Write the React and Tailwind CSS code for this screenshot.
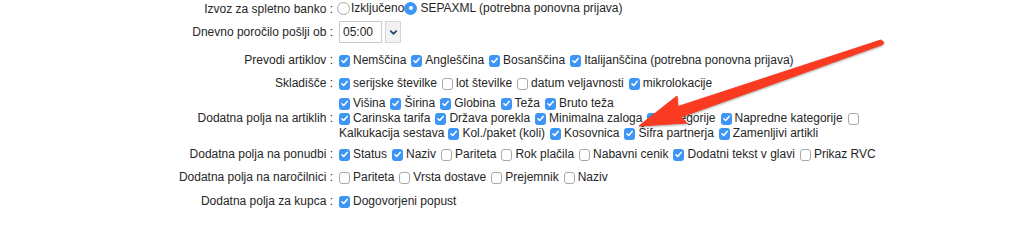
import React from "react";

function Cb({ checked }) {
  return checked ? (
    <span className="inline-flex h-[12px] w-[11px] shrink-0 items-center justify-center rounded-[3px] bg-[#3d95f6]">
      <svg viewBox="0 0 12 12" className="h-[11px] w-[11px]">
        <path d="M3.2 6.3 L5.1 8.2 L8.9 3.7" fill="none" stroke="white" strokeWidth="1.7" strokeLinecap="round" strokeLinejoin="round" />
      </svg>
    </span>
  ) : (
    <span className="inline-block h-[12px] w-[11px] shrink-0 rounded-[3px] border border-[#a9a9a9] bg-white" />
  );
}

function Radio({ checked }) {
  return checked ? (
    <span className="inline-flex h-[13px] w-[13px] shrink-0 items-center justify-center rounded-full bg-[#3d95f6]">
      <span className="h-[4px] w-[4px] rounded-full bg-white" />
    </span>
  ) : (
    <span className="inline-block h-[13px] w-[13px] shrink-0 rounded-full border border-[#a9a9a9] bg-white" />
  );
}

function Item({ checked, children }) {
  return (
    <span className="mr-[5px] inline-flex items-center gap-[3px] whitespace-nowrap">
      <Cb checked={checked} />
      <span>{children}</span>
    </span>
  );
}

function Row({ label, className = "", children }) {
  return (
    <div className={"flex items-center " + className}>
      <div className="w-[333px] shrink-0 whitespace-nowrap text-right">{label} :</div>
      <div className="pl-[6px]">{children}</div>
    </div>
  );
}

export default function App() {
  return (
    <div
      className="relative h-[215px] w-[1024px] overflow-hidden bg-white text-[12px] leading-[15px] text-[#262626]"
      style={{ fontFamily: '"Liberation Sans", Arial, sans-serif' }}
    >
      <div className="flex flex-col pt-[2px]">
        <Row label="Izvoz za spletno banko" className="h-[15px]">
          <span className="-ml-[2px] inline-flex items-center">
            <Radio />
            <span className="ml-[1px]">Izključeno</span>
            <Radio checked />
            <span className="ml-[3px]">SEPAXML (potrebna ponovna prijava)</span>
          </span>
        </Row>
        <Row label="Dnevno poročilo pošlji ob" className="mt-[4px] h-[22px]">
          <div className="flex items-center gap-[3px]">
            <div className="flex h-[22px] w-[43px] items-center border border-[#c9c9c9] bg-white pl-[3px]">05:00</div>
            <div className="flex h-[22px] w-[16px] items-center justify-center border border-[#d6d6d6] border-r-[#c6dcc6] bg-[#f2f2f2]">
              <svg viewBox="0 0 10 10" className="h-[9px] w-[9px]">
                <path d="M2 3.5 L5 6.5 L8 3.5" fill="none" stroke="#27466f" strokeWidth="2" strokeLinecap="round" strokeLinejoin="round" />
              </svg>
            </div>
          </div>
        </Row>
        <Row label="Prevodi artiklov" className="mt-[10px] h-[15px]">
          <div className="flex items-center">
            <Item checked>Nemščina</Item>
            <Item checked>Angleščina</Item>
            <Item checked>Bosanščina</Item>
            <Item checked>Italijanščina (potrebna ponovna prijava)</Item>
          </div>
        </Row>
        <Row label="Skladišče" className="mt-[8px] h-[15px]">
          <div className="flex items-center">
            <Item checked>serijske številke</Item>
            <Item>lot številke</Item>
            <Item>datum veljavnosti</Item>
            <Item checked>mikrolokacije</Item>
          </div>
        </Row>
        <Row label="Dodatna polja na artiklih" className="mt-[5px] h-[45px]">
          <div className="flex flex-col">
            <div className="flex h-[15px] items-center">
              <Item checked>Višina</Item>
              <Item checked>Širina</Item>
              <Item checked>Globina</Item>
              <Item checked>Teža</Item>
              <Item checked>Bruto teža</Item>
            </div>
            <div className="flex h-[15px] items-center">
              <Item checked>Carinska tarifa</Item>
              <Item checked>Država porekla</Item>
              <Item checked>Minimalna zaloga</Item>
              <Item checked>Kategorije</Item>
              <Item checked>Napredne kategorije</Item>
              <Cb />
            </div>
            <div className="flex h-[15px] items-center">
              <span className="mr-[4px]">Kalkukacija sestava</span>
              <Item checked>Kol./paket (koli)</Item>
              <Item checked>Kosovnica</Item>
              <Item checked>Šifra partnerja</Item>
              <Item checked>Zamenljivi artikli</Item>
            </div>
          </div>
        </Row>
        <Row label="Dodatna polja na ponudbi" className="mt-[6px] h-[15px]">
          <div className="flex items-center">
            <Item checked>Status</Item>
            <Item checked>Naziv</Item>
            <Item>Pariteta</Item>
            <Item>Rok plačila</Item>
            <Item>Nabavni cenik</Item>
            <Item checked>Dodatni tekst v glavi</Item>
            <Item>Prikaz RVC</Item>
          </div>
        </Row>
        <Row label="Dodatna polja na naročilnici" className="mt-[8px] h-[15px]">
          <div className="flex items-center">
            <Item>Pariteta</Item>
            <Item>Vrsta dostave</Item>
            <Item>Prejemnik</Item>
            <Item>Naziv</Item>
          </div>
        </Row>
        <Row label="Dodatna polja za kupca" className="mt-[9px] h-[15px]">
          <div className="flex items-center">
            <Item checked>Dogovorjeni popust</Item>
          </div>
        </Row>
      </div>

      <svg
        className="pointer-events-none absolute left-0 top-0"
        width="1024"
        height="215"
        viewBox="0 0 1024 215"
        style={{ filter: "drop-shadow(0px 1px 1px rgba(0,0,0,0.35))" }}
      >
        <polygon
          points="639,126 677,96 678,106.5 881,40 884,42.5 882.6,44.5 681,117 687,123"
          fill="#fb3a22"
          strokeLinejoin="round"
          stroke="#fb3a22"
          strokeWidth="1"
        />
      </svg>
    </div>
  );
}
